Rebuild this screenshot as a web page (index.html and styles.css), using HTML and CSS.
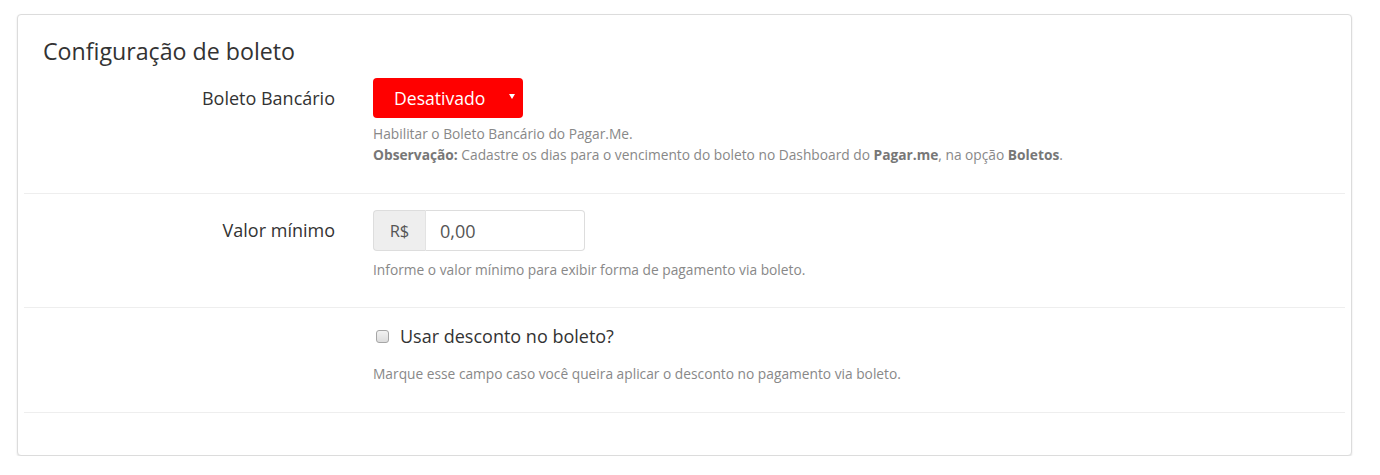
FILE: index.html
```html
<!DOCTYPE html>
<html lang="pt-BR">
<head>
<meta charset="utf-8">
<title>Configuração de boleto</title>
<link rel="stylesheet" href="styles.css">
</head>
<body>
<div class="panel">
  <h2 class="panel-title">Configuração de boleto</h2>
  <div class="form-group">
    <label class="label">Boleto Bancário</label>
    <div class="control">
      <div class="select">
        <span>Desativado</span>
        <span class="caret"></span>
      </div>
      <p class="help">Habilitar o Boleto Bancário do Pagar.Me.<br><b>Observação:</b> Cadastre os dias para o vencimento do boleto no Dashboard do <b>Pagar.me</b>, na opção <b>Boletos</b>.</p>
    </div>
  </div>
  <div class="form-group">
    <label class="label label-input">Valor mínimo</label>
    <div class="control">
      <div class="input-group">
        <span class="addon">R$</span>
        <input class="input" type="text" value="0,00">
      </div>
      <p class="help help-input">Informe o valor mínimo para exibir forma de pagamento via boleto.</p>
    </div>
  </div>
  <div class="form-group">
    <div class="label"></div>
    <div class="control">
      <label class="check"><input type="checkbox" class="checkbox"><span>Usar desconto no boleto?</span></label>
      <p class="help help-check">Marque esse campo caso você queira aplicar o desconto no pagamento via boleto.</p>
    </div>
  </div>
</div>
</body>
</html>
```

FILE: styles.css
```css
* { box-sizing: border-box; }
html, body { margin: 0; padding: 0; background: #fff; }
body {
  font-family: "Open Sans", "Liberation Sans", sans-serif;
  color: #333;
  padding: 14px 0 0 17px;
}
.panel {
  width: 1335px;
  border: 1px solid #dcdcdc;
  border-radius: 4px;
  box-shadow: 0 1px 2px rgba(0,0,0,0.12);
  background: #fff;
  padding: 0 6px 42px;
}
.panel-title {
  margin: 0;
  padding: 24px 0 0 19px;
  font-size: 23.2px;
  line-height: 24px;
  font-weight: 400;
  color: #333;
}
.form-group {
  display: grid;
  grid-template-columns: 311px 1fr;
  column-gap: 38px;
  padding: 15px 0 28px;
  border-bottom: 1px solid #eee;
}
.form-group + .form-group { padding-top: 16px; padding-bottom: 27px; }
.form-group:last-child { padding-bottom: 28px; }
.label {
  text-align: right;
  font-size: 18px;
  line-height: 40px;
  font-weight: 400;
  color: #333;
}
.label-input { line-height: 41px; }
.select {
  width: 150px;
  height: 40px;
  background: #ff0000;
  border-radius: 4px;
  color: #fff;
  font-size: 17.6px;
  display: flex;
  align-items: center;
  justify-content: space-between;
  padding: 0 8px 0 21px;
}
.caret {
  width: 0; height: 0;
  border-left: 3.5px solid transparent;
  border-right: 3.5px solid transparent;
  border-top: 5px solid #fff;
  margin-bottom: 3px;
}
.help {
  margin: 5px 0 0;
  font-size: 13.75px;
  line-height: 21px;
  color: #888;
}
.help b { color: #777; font-weight: 700; }
.help-input { margin-top: 8px; }
.help-check { margin-top: 15px; }
.input-group {
  display: flex;
  width: 212px;
  height: 41px;
}
.addon {
  width: 53px;
  background: #eee;
  border: 1px solid #ddd;
  border-right: 1px solid #e3e3e3;
  border-radius: 4px 0 0 4px;
  color: #555;
  font-size: 16.5px;
  display: flex;
  align-items: center;
  justify-content: center;
}
.input {
  flex: 1;
  min-width: 0;
  border: 1px solid #ddd;
  border-left: 0;
  border-radius: 0 4px 4px 0;
  font-family: inherit;
  font-size: 18px;
  color: #555;
  padding: 0 14px;
  outline: none;
  background: #fff;
}
.check {
  display: flex;
  align-items: center;
  height: 24px;
  font-size: 18px;
  font-weight: 400;
  color: #333;
}
.checkbox {
  appearance: none;
  -webkit-appearance: none;
  width: 13px;
  height: 13px;
  margin: 0 11px 0 3px;
  border: 1px solid #a6a6a6;
  border-radius: 3px;
  background: linear-gradient(#f2f2f2, #dcdcdc);
}
```
